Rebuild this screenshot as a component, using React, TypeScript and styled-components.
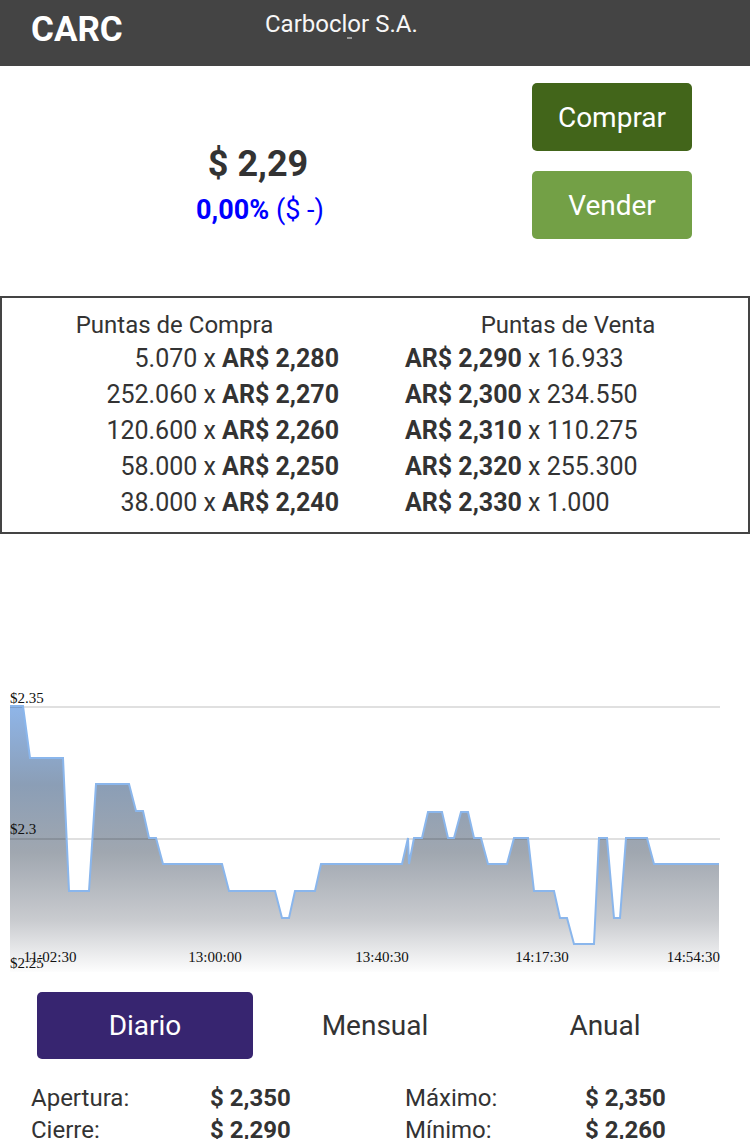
import React from 'react';
import styled, { createGlobalStyle } from 'styled-components';

const GlobalStyle = createGlobalStyle`
  html, body {
    margin: 0;
    padding: 0;
    background: #ffffff;
  }
  body {
    font-family: Roboto, 'Noto Sans', sans-serif;
    color: #333333;
  }
`;

const bids = [
  { qty: '5.070', price: 'AR$ 2,280' },
  { qty: '252.060', price: 'AR$ 2,270' },
  { qty: '120.600', price: 'AR$ 2,260' },
  { qty: '58.000', price: 'AR$ 2,250' },
  { qty: '38.000', price: 'AR$ 2,240' },
];

const asks = [
  { qty: '16.933', price: 'AR$ 2,290' },
  { qty: '234.550', price: 'AR$ 2,300' },
  { qty: '110.275', price: 'AR$ 2,310' },
  { qty: '255.300', price: 'AR$ 2,320' },
  { qty: '1.000', price: 'AR$ 2,330' },
];

// intraday trace, page coordinates (chart viewBox starts at y=680)
const trace: [number, number][] = [
  [10, 706], [23, 706], [30, 758], [63, 758], [69, 891], [89, 891], [96, 784], [129, 784],
  [136, 811], [143, 811], [149, 838], [156, 838], [163, 864], [222, 864], [229, 891], [275, 891],
  [282, 918], [289, 918], [295, 891], [315, 891], [321, 864], [402, 864], [408, 838], [409, 864],
  [414, 838], [422, 838], [428, 812], [442, 812], [448, 838], [454, 838], [461, 812], [468, 812],
  [474, 838], [481, 838], [488, 864], [507, 864], [514, 838], [528, 838], [534, 891], [554, 891],
  [560, 918], [567, 918], [574, 944], [594, 944], [599, 838], [607, 838], [614, 918], [620, 918],
  [626, 838], [647, 838], [654, 864], [719, 864],
];

const timeLabels = [
  { x: 50, text: '11:02:30', anchor: 'middle' },
  { x: 215, text: '13:00:00', anchor: 'middle' },
  { x: 382, text: '13:40:30', anchor: 'middle' },
  { x: 542, text: '14:17:30', anchor: 'middle' },
  { x: 720, text: '14:54:30', anchor: 'end' },
];

const tabs = ['Diario', 'Mensual', 'Anual'];

export default function App() {
  const line = trace.map(([x, y]) => `${x},${y}`).join(' ');
  const area = `M10,972 L${trace.map(([x, y]) => `${x},${y}`).join(' L')} L719,972 Z`;

  return (
    <Page>
      <GlobalStyle />
      <Header>
        <Ticker>CARC</Ticker>
        <Company>
          Carboclor S.A.
          <Blip />
        </Company>
      </Header>

      <Summary>
        <Quote>
          <Price>$ 2,29</Price>
          <Change>
            <b>0,00%</b> ($ -)
          </Change>
        </Quote>
        <Actions>
          <ActionButton $tone="#42651a">Comprar</ActionButton>
          <ActionButton $tone="#73a046">Vender</ActionButton>
        </Actions>
      </Summary>

      <Book>
        <BookColumn $align="right">
          <BookTitle>Puntas de Compra</BookTitle>
          {bids.map((b) => (
            <BookRow key={b.price}>
              {b.qty} x <b>{b.price}</b>
            </BookRow>
          ))}
        </BookColumn>
        <BookColumn $align="left">
          <BookTitle>Puntas de Venta</BookTitle>
          {asks.map((a) => (
            <BookRow key={a.price}>
              <b>{a.price}</b> x {a.qty}
            </BookRow>
          ))}
        </BookColumn>
      </Book>

      <Chart viewBox="0 680 750 300" width={750} height={300}>
        <defs>
          <linearGradient id="fill" gradientUnits="userSpaceOnUse" x1="0" y1="704" x2="0" y2="974">
            <stop offset="0" stopColor="#8fb6ea" />
            <stop offset="0.3" stopColor="#8b9eb6" />
            <stop offset="0.55" stopColor="#a0a7b0" />
            <stop offset="0.8" stopColor="#c9cbcf" />
            <stop offset="1" stopColor="#ffffff" />
          </linearGradient>
        </defs>
        <path d={area} fill="url(#fill)" />
        <line x1="10" y1="707" x2="720" y2="707" stroke="rgba(0,0,0,0.12)" strokeWidth="2" />
        <line x1="10" y1="839" x2="720" y2="839" stroke="rgba(0,0,0,0.12)" strokeWidth="2" />
        <polyline points={line} fill="none" stroke="#8ab6ec" strokeWidth="2" />
        <AxisText x="10" y="703">$2.35</AxisText>
        <AxisText x="10" y="834">$2.3</AxisText>
        <AxisText x="10" y="968">$2.25</AxisText>
        {timeLabels.map((t) => (
          <AxisText key={t.text} x={t.x} y="962" textAnchor={t.anchor}>
            {t.text}
          </AxisText>
        ))}
      </Chart>

      <Tabs>
        {tabs.map((t, i) => (
          <Tab key={t} $active={i === 0}>
            {t}
          </Tab>
        ))}
      </Tabs>

      <Stats>
        <StatLabel>Apertura:</StatLabel>
        <StatValue>$ 2,350</StatValue>
        <StatLabel>Máximo:</StatLabel>
        <StatValue>$ 2,350</StatValue>
        <StatLabel>Cierre:</StatLabel>
        <StatValue>$ 2,290</StatValue>
        <StatLabel>Mínimo:</StatLabel>
        <StatValue>$ 2,260</StatValue>
      </Stats>
    </Page>
  );
}

const Page = styled.div`
  width: 750px;
  height: 1139px;
  overflow: hidden;
  background: #ffffff;
`;

const Header = styled.header`
  height: 66px;
  background: #444444;
  display: flex;
  align-items: flex-start;
  padding-left: 31px;
  box-sizing: border-box;
  color: #ffffff;
`;

const Ticker = styled.div`
  width: 234px;
  font-size: 35px;
  font-weight: 700;
  line-height: 60px;
`;

const Company = styled.div`
  position: relative;
  font-size: 24px;
  line-height: 24px;
  padding-top: 12px;
  color: #f7f7f7;
`;

const Blip = styled.span`
  position: absolute;
  left: 82px;
  top: 37px;
  width: 5px;
  height: 2px;
  background: #9a9a9a;
`;

const Summary = styled.section`
  height: 230px;
  display: flex;
  padding-top: 17px;
  box-sizing: border-box;
`;

const Quote = styled.div`
  width: 516px;
  padding-top: 61px;
  text-align: center;
`;

const Price = styled.div`
  font-size: 36px;
  font-weight: 700;
  line-height: 40px;
  color: #333333;
`;

const Change = styled.div`
  font-size: 27px;
  line-height: 32px;
  margin-top: 10px;
  padding-left: 4px;
  color: #0000ff;
  b {
    font-weight: 700;
  }
`;

const Actions = styled.div`
  margin-left: 16px;
  display: flex;
  flex-direction: column;
  gap: 20px;
`;

const ActionButton = styled.button<{ $tone: string }>`
  width: 160px;
  height: 68px;
  border: none;
  border-radius: 5px;
  background: ${(p) => p.$tone};
  color: #ffffff;
  font-family: Roboto, sans-serif;
  font-size: 28px;
  padding: 0;
`;

const Book = styled.section`
  height: 238px;
  box-sizing: border-box;
  border: 2px solid #444444;
  display: grid;
  grid-template-columns: 329px 326px;
  column-gap: 66px;
  padding: 11px 0 0 8px;
`;

const BookColumn = styled.div<{ $align: 'left' | 'right' }>`
  text-align: ${(p) => p.$align};
  font-size: 25px;
  color: #333333;
`;

const BookTitle = styled.div`
  text-align: center;
  font-size: 24px;
  line-height: 32px;
`;

const BookRow = styled.div`
  line-height: 36px;
  b {
    font-weight: 700;
  }
`;

const Chart = styled.svg`
  display: block;
  margin-top: 146px;
`;

const AxisText = styled.text`
  font-family: 'Liberation Serif', 'Times New Roman', serif;
  font-size: 15px;
  fill: #111111;
`;

const Tabs = styled.nav`
  display: grid;
  grid-template-columns: repeat(3, 230px);
  padding: 12px 0 0 30px;
`;

const Tab = styled.div<{ $active: boolean }>`
  margin: 0 7px;
  height: 67px;
  border-radius: 5px;
  display: flex;
  align-items: center;
  justify-content: center;
  font-size: 28px;
  background: ${(p) => (p.$active ? '#372570' : 'transparent')};
  color: ${(p) => (p.$active ? '#ffffff' : '#333333')};
`;

const Stats = styled.section`
  display: grid;
  grid-template-columns: 179px 195px 180px auto;
  padding: 23px 0 0 31px;
  font-size: 24px;
  line-height: 32px;
  color: #333333;
`;

const StatLabel = styled.div``;

const StatValue = styled.div`
  font-weight: 700;
`;
